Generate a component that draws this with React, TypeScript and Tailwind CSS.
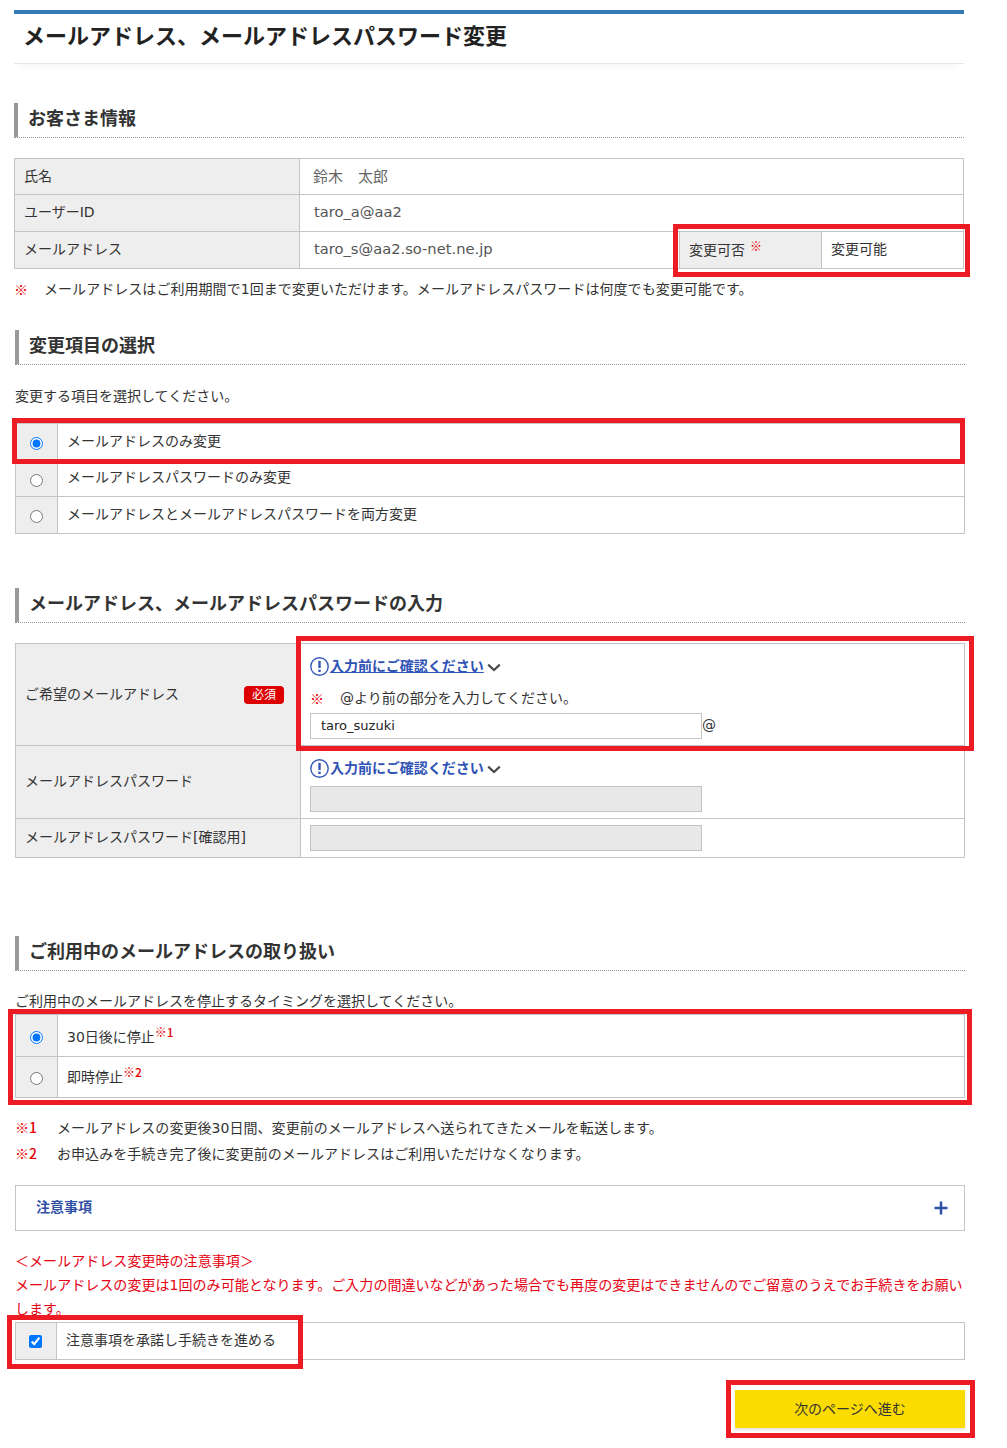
import React from "react";

const cellLine = "border-[#c4c4c4]";
const mark = "font-['Noto_Sans_CJK_JP'] font-medium text-[#e60000]";

// section heading with the grey bar on the left and a dotted rule under it
const SectionHeading = ({ title }: { title: string }) => (
  <h2 className="h-[35px] border-l-4 border-b border-l-[#999999] border-b-[#999999] [border-bottom-style:dotted] pl-[10px] text-[18px] leading-[32px] font-bold text-[#333333]">
    {title}
  </h2>
);

const InfoLink = ({ underline }: { underline?: boolean }) => (
  <div className="flex h-5 items-center text-[14px] font-bold text-[#2f53b5]">
    <svg width="19" height="19" viewBox="0 0 19 19" fill="none" className="mr-[1px] shrink-0">
      <circle cx="9.5" cy="9.5" r="8.7" stroke="#3558b8" strokeWidth="1.4" />
      <path d="M9.5 3.8v7.2" stroke="#3558b8" strokeWidth="2.4" />
      <path d="M9.5 12.6v2.4" stroke="#3558b8" strokeWidth="2.4" />
    </svg>
    <span className={underline ? "underline" : ""}>入力前にご確認ください</span>
    <svg width="14" height="9" viewBox="0 0 14 9" fill="none" className="mt-[3px] ml-[3px]">
      <path d="M1.2 1.6 7 7l5.8-5.4" stroke="#4d4d4d" strokeWidth="2.2" />
    </svg>
  </div>
);

const RadioRow = ({
  checked,
  name,
  className,
  children,
}: {
  checked?: boolean;
  name: string;
  className: string;
  children: React.ReactNode;
}) => (
  <div className={`flex border-b ${cellLine} ${className}`}>
    <div className={`flex w-[42px] shrink-0 items-center justify-center border-r bg-[#eeeeee] ${cellLine}`}>
      <input type="radio" name={name} defaultChecked={checked} className="mt-[3px]" />
    </div>
    <div className="flex items-center pb-[2px] pl-[9px] text-[14px]">{children}</div>
  </div>
);

const Note = ({ children }: { children: React.ReactNode }) => (
  <span className={`relative -top-[5px] text-[12px] leading-none ${mark}`}>{children}</span>
);

// red annotation frames drawn over the captured page
const Frame = ({ className }: { className: string }) => (
  <div className={`pointer-events-none absolute border-[5px] border-[#ed1c24] ${className}`} />
);

export default function App() {
  return (
    <div
      className="relative h-[1448px] w-[1007px] overflow-hidden bg-white pt-[10px] text-[14px] text-[#333333]"
      style={{ fontFamily: '"DejaVu Sans", "Noto Sans CJK JP", sans-serif' }}
    >
      <div className="ml-[14px] w-[950px]">
        <h1 className="h-[54px] border-t-4 border-b border-t-[#337ab7] border-b-[#e6e6e6] pl-[9px] text-[22px] leading-[46px] font-bold text-[#222222] shadow-[0_6px_8px_-6px_rgba(0,0,0,0.08)]">
          メールアドレス、メールアドレスパスワード変更
        </h1>

        <div className="mt-[39px]">
          <SectionHeading title="お客さま情報" />
        </div>

        <div className={`mt-[20px] border-x border-t ${cellLine}`}>
          <div className={`flex h-[36px] border-b ${cellLine}`}>
            <div className={`flex w-[285px] items-center border-r bg-[#eeeeee] pb-[1px] pl-[9px] ${cellLine}`}>氏名</div>
            <div className="flex items-center pt-[1px] pl-[13px] text-[15px] text-[#666666]">鈴木　太郎</div>
          </div>
          <div className={`flex h-[37px] border-b ${cellLine}`}>
            <div className={`flex w-[285px] items-center border-r bg-[#eeeeee] pb-[2px] pl-[9px] ${cellLine}`}>ユーザーID</div>
            <div className="flex items-center pb-[1px] pl-[14px] text-[14.7px] text-[#555555]">taro_a@aa2</div>
          </div>
          <div className={`flex h-[37px] border-b ${cellLine}`}>
            <div className={`flex w-[285px] items-center border-r bg-[#eeeeee] pb-[2px] pl-[9px] ${cellLine}`}>メールアドレス</div>
            <div className="flex w-[379px] items-center pb-[2px] pl-[14px] text-[14.7px] text-[#555555]">taro_s@aa2.so-net.ne.jp</div>
            <div className={`flex w-[143px] items-center border-x bg-[#eeeeee] pt-[1px] pl-[9px] ${cellLine}`}>
              変更可否
              <span className={`relative -top-[5px] ml-[5px] text-[12px] leading-none ${mark}`}>※</span>
            </div>
            <div className="flex items-center pb-[2px] pl-[9px]">変更可能</div>
          </div>
        </div>

        <p className="mt-[10px] flex h-5 items-center leading-5 tracking-[0.05px]">
          <span className={`w-[30px] ${mark}`}>※</span>
          メールアドレスはご利用期間で1回まで変更いただけます。メールアドレスパスワードは何度でも変更可能です。
        </p>
      </div>

      <div className="ml-[15px] w-[950px]">
        <div className="mt-[31px]">
          <SectionHeading title="変更項目の選択" />
        </div>
        <p className="mt-[21px] h-5 leading-5">変更する項目を選択してください。</p>

        <div className={`mt-[17px] border-x border-t ${cellLine}`}>
          <RadioRow name="item" checked className="h-[37px]">メールアドレスのみ変更</RadioRow>
          <RadioRow name="item" className="h-[36px]">メールアドレスパスワードのみ変更</RadioRow>
          <RadioRow name="item" className="h-[37px]">メールアドレスとメールアドレスパスワードを両方変更</RadioRow>
        </div>

        <div className="mt-[54px]">
          <SectionHeading title="メールアドレス、メールアドレスパスワードの入力" />
        </div>

        <div className={`mt-[20px] border-x border-t ${cellLine}`}>
          <div className={`flex h-[102px] border-b ${cellLine}`}>
            <div className={`flex w-[285px] items-center justify-between border-r bg-[#eeeeee] pr-[16px] pl-[9px] ${cellLine}`}>
              ご希望のメールアドレス
              <span className="flex h-[18px] w-[40px] items-center justify-center rounded-[4px] bg-[#dc0000] text-[12px] text-white">必須</span>
            </div>
            <div className="pt-[12px] pl-[9px]">
              <InfoLink underline />
              <div className="mt-[12px] flex h-5 items-center">
                <span className={`w-[30px] ${mark}`}>※</span>
                @より前の部分を入力してください。
              </div>
              <div className="mt-[5px] flex items-center">
                <input
                  type="text"
                  readOnly
                  value="taro_suzuki"
                  className={`h-[26px] w-[392px] border pb-[2px] pl-[10px] text-[13px] text-[#222222] ${cellLine}`}
                />
                <span className="pb-[2px]">@</span>
              </div>
            </div>
          </div>
          <div className={`flex h-[73px] border-b ${cellLine}`}>
            <div className={`flex w-[285px] items-center border-r bg-[#eeeeee] pb-[2px] pl-[9px] ${cellLine}`}>メールアドレスパスワード</div>
            <div className="pt-[12px] pl-[9px]">
              <InfoLink />
              <div className={`mt-[8px] h-[26px] w-[392px] border bg-[#e8e8e8] ${cellLine}`} />
            </div>
          </div>
          <div className={`flex h-[39px] border-b ${cellLine}`}>
            <div className={`flex w-[285px] items-center border-r bg-[#eeeeee] pb-[2px] pl-[9px] ${cellLine}`}>メールアドレスパスワード[確認用]</div>
            <div className="flex items-center pl-[9px]">
              <div className={`h-[26px] w-[392px] border bg-[#e8e8e8] ${cellLine}`} />
            </div>
          </div>
        </div>

        <div className="mt-[78px]">
          <SectionHeading title="ご利用中のメールアドレスの取り扱い" />
        </div>
        <p className="mt-[20px] h-5 leading-5">ご利用中のメールアドレスを停止するタイミングを選択してください。</p>

        <div className={`mt-[3px] border-x border-t ${cellLine}`}>
          <RadioRow name="timing" checked className="h-[42px]">
            <span className="mt-[5px]">
              30日後に停止<Note>※1</Note>
            </span>
          </RadioRow>
          <RadioRow name="timing" className="h-[41px]">
            <span className="mt-[3px]">
              即時停止<Note>※2</Note>
            </span>
          </RadioRow>
        </div>

        <div className="mt-[19px] h-[26px] leading-5 tracking-[0.05px]">
          <span className={`inline-block w-[42px] ${mark}`}>※1</span>
          メールアドレスの変更後30日間、変更前のメールアドレスへ送られてきたメールを転送します。
        </div>
        <div className="h-[26px] leading-5 tracking-[0.05px]">
          <span className={`inline-block w-[42px] ${mark}`}>※2</span>
          お申込みを手続き完了後に変更前のメールアドレスはご利用いただけなくなります。
        </div>

        <div className={`mt-[16px] flex h-[46px] items-center justify-between border pr-[16px] pl-[20px] font-bold text-[#2f4fa5] ${cellLine}`}>
          <span className="pb-[2px]">注意事項</span>
          <svg width="14" height="14" viewBox="0 0 14 14" fill="none">
            <path d="M7 .5v13M.5 7h13" stroke="#2f4fa5" strokeWidth="2.5" />
          </svg>
        </div>

        <div className="mt-[18px] leading-[24px] tracking-[0.05px] text-[#e60012]">
          <p>＜メールアドレス変更時の注意事項＞</p>
          <p>
            メールアドレスの変更は1回のみ可能となります。ご入力の間違いなどがあった場合でも再度の変更はできませんのでご留意のうえでお手続きをお願いします。
          </p>
        </div>

        <div className={`mt-[1px] flex h-[38px] border ${cellLine}`}>
          <div className={`flex w-[41px] items-center justify-center border-r bg-[#eeeeee] pr-[2px] ${cellLine}`}>
            <input type="checkbox" defaultChecked />
          </div>
          <div className="flex items-center pb-[2px] pl-[9px]">注意事項を承諾し手続きを進める</div>
        </div>

        <div className="mt-[30px] flex justify-end">
          <button className="h-[38px] w-[230px] bg-[#fbdb00] text-[14px] text-[#333333] shadow-[0_2px_3px_rgba(0,0,0,0.12)]">
            次のページへ進む
          </button>
        </div>
      </div>

      <Frame className="top-[224px] left-[673px] h-[53px] w-[297px]" />
      <Frame className="top-[418px] left-[12px] h-[46px] w-[953px]" />
      <Frame className="top-[636px] left-[296px] h-[115px] w-[678px]" />
      <Frame className="top-[1009px] left-[8px] h-[96px] w-[964px]" />
      <Frame className="top-[1315px] left-[7px] h-[54px] w-[296px]" />
      <Frame className="top-[1380px] left-[726px] h-[58px] w-[249px]" />
    </div>
  );
}
